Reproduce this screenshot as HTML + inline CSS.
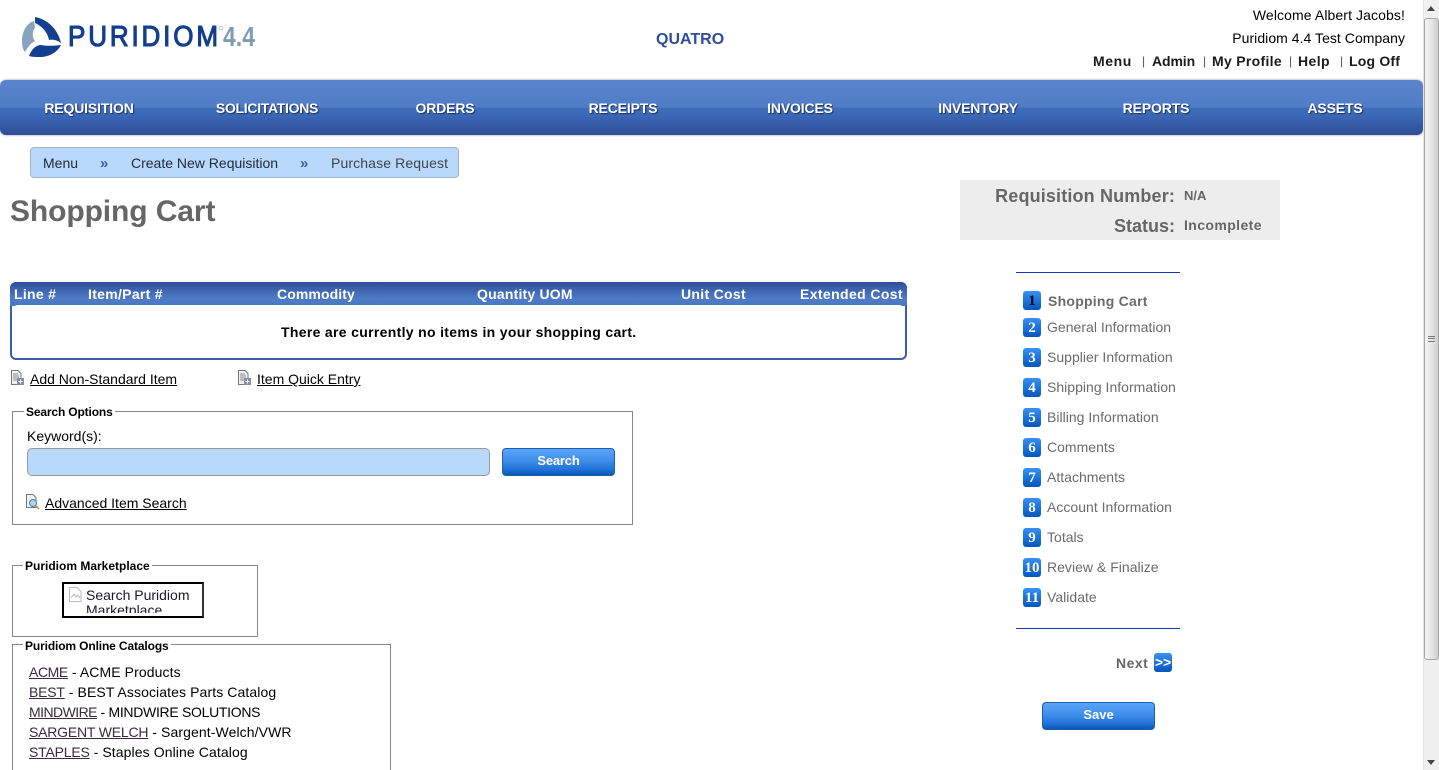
<!DOCTYPE html>
<html><head><meta charset="utf-8"><title>Shopping Cart</title>
<style>
html,body{margin:0;padding:0;background:#fff;overflow:hidden}
body{width:1439px;height:770px;position:relative;font-family:"Liberation Sans",Arial,sans-serif;font-size:14px;color:#000}
.t{position:absolute;white-space:nowrap;line-height:20px}
.b{font-weight:bold}
a{color:inherit}
.nav{position:absolute;left:0;top:80px;width:1423px;height:55px;border-radius:6px;background:linear-gradient(#5a84ca 0,#4f7cc6 50%,#3d6db9 51%,#3a68b5 65%,#2f4d97 100%);box-shadow:0 0 2px #888}
.n{position:absolute;top:98px;width:160px;text-align:center;color:#fff;font-weight:bold;font-size:14px;line-height:20px;text-shadow:1px 1px 1px #1c2f60;letter-spacing:-.15px}
.th{position:absolute;top:284px;color:#fff;font-weight:bold;font-size:14px;line-height:20px;white-space:nowrap;letter-spacing:.3px}
.fs{position:absolute;border:1px solid #888;box-sizing:border-box}
.lg{position:absolute;background:#fff;padding:0 2px;font-weight:bold;font-size:12px;line-height:14px;white-space:nowrap}
.btn{position:absolute;border-radius:4px;border:1px solid #1a5fb0;box-sizing:border-box;background:linear-gradient(#5aa4fa 0,#3f8eea 45%,#1f70d8 80%,#0a58b0 100%);color:#fff;font-weight:bold;font-size:13px;text-align:center}
.num{position:absolute;left:1023px;width:18px;height:19px;border-radius:3px;background:linear-gradient(#3a90ee,#1c74dc 50%,#0556b8);color:#fff;font:bold 15px/20px "Liberation Serif",serif;text-align:center}
.st{position:absolute;left:1047px;color:#6b6b6b;font-size:14px;line-height:20px;white-space:nowrap;letter-spacing:.02px}
.sep{position:absolute;left:1016px;width:164px;height:1px;background:#1238c0}
.cat{position:absolute;left:29px;line-height:20px;white-space:nowrap;letter-spacing:.1px}
.cat a{color:#3a2a3a;letter-spacing:-.2px}
.ic{position:absolute}
</style></head><body>

<svg style="position:absolute;left:20px;top:15px" width="240" height="44" viewBox="0 0 240 44">
<path d="M15 2 C27 4 38 14 41 28 C37 25 33 24 29 25 C28 18 22 11 15 8 Z" fill="#123f8e"/>
<path d="M14 6 C7 8 2 16 2 26 C2 31 3 35 5 37 C8 32 11 28 15 26 C12 22 12 17 15 13 Z" fill="#87a3bd"/>
<path d="M9 41 C12 33 17 30 21 30 C26 31 32 31 41 30 C37 38 28 42 20 42 C16 42 12 42 9 41 Z" fill="#123f8e"/>
<text transform="translate(48,31) scale(1,1.12)" font-family="Liberation Sans,sans-serif" font-size="26" fill="#123f8e" stroke="#123f8e" stroke-width="1" textLength="150" lengthAdjust="spacing">PURIDIOM</text>
<circle cx="201" cy="13" r="1.800" fill="none" stroke="#a9bccd" stroke-width=".8"/>
<text x="203" y="31" font-family="Liberation Sans,sans-serif" font-weight="bold" font-size="28" fill="#7f9bb4" textLength="32" lengthAdjust="spacingAndGlyphs">4.4</text>
</svg>

<div class="t b" style="left:656px;top:30px;font-size:16px;line-height:20px;color:#2f4d9b">QUATRO</div>
<div class="t" style="right:34px;top:5px;letter-spacing:.1px">Welcome Albert Jacobs!</div>
<div class="t" style="right:34px;top:28px;letter-spacing:.04px">Puridiom 4.4 Test Company</div>
<div class="t b" style="left:1093px;top:51px;color:#1a1a1a;letter-spacing:.6px">Menu</div>
<div class="t" style="left:1142px;top:51px;color:#555;font-size:12px">|</div>
<div class="t b" style="left:1152px;top:51px;color:#1a1a1a;letter-spacing:-.1px">Admin</div>
<div class="t" style="left:1203px;top:51px;color:#555;font-size:12px">|</div>
<div class="t b" style="left:1212px;top:51px;color:#1a1a1a;letter-spacing:.3px">My Profile</div>
<div class="t" style="left:1289px;top:51px;color:#555;font-size:12px">|</div>
<div class="t b" style="left:1298px;top:51px;color:#1a1a1a;letter-spacing:.4px">Help</div>
<div class="t" style="left:1340px;top:51px;color:#555;font-size:12px">|</div>
<div class="t b" style="left:1349px;top:51px;color:#1a1a1a;letter-spacing:.2px">Log Off</div>

<div class="nav"></div>
<div class="n" style="left:9px">REQUISITION</div>
<div class="n" style="left:187px;letter-spacing:-.3px">SOLICITATIONS</div>
<div class="n" style="left:365px">ORDERS</div>
<div class="n" style="left:543px">RECEIPTS</div>
<div class="n" style="left:720px">INVOICES</div>
<div class="n" style="left:898px">INVENTORY</div>
<div class="n" style="left:1076px">REPORTS</div>
<div class="n" style="left:1255px">ASSETS</div>

<div style="position:absolute;left:30px;top:147px;width:429px;height:31px;box-sizing:border-box;background:#b9d9fc;border:1px solid #a8b4c4;border-radius:4px"></div>
<div class="t" style="left:43px;top:153px;color:#222b3a">Menu</div>
<div class="t b" style="left:100px;top:154px;color:#3a5aa8;font-size:15px">»</div>
<div class="t" style="left:131px;top:153px;color:#222b3a">Create New Requisition</div>
<div class="t b" style="left:300px;top:154px;color:#3a5aa8;font-size:15px">»</div>
<div class="t" style="left:331px;top:153px;color:#3f444c;letter-spacing:.12px">Purchase Request</div>

<div class="t b" style="left:10px;top:195px;font-size:30px;line-height:34px;color:#666;letter-spacing:-.1px">Shopping Cart</div>

<div style="position:absolute;left:960px;top:180px;width:320px;height:60px;background:#ededed"></div>
<div class="t b" style="right:264px;top:186px;font-size:18px;color:#666;letter-spacing:.15px">Requisition Number:</div>
<div class="t b" style="left:1184px;top:186px;font-size:13px;color:#666">N/A</div>
<div class="t b" style="right:264px;top:216px;font-size:18px;color:#666">Status:</div>
<div class="t b" style="left:1184px;top:215px;font-size:14px;color:#666;letter-spacing:.4px">Incomplete</div>

<div style="position:absolute;left:10px;top:282px;width:897px;height:78px;box-sizing:border-box;border:2px solid #3a5ea8;border-radius:6px;background:#fff"></div>
<div style="position:absolute;left:10px;top:282px;width:897px;height:24px;border-radius:6px 6px 0 0;background:linear-gradient(#2f4f9c,#4f7cc6 70%,#4a76c0)"></div>
<div style="position:absolute;left:12px;top:305px;width:893px;height:6px;background:#fff;border-radius:6px 6px 0 0"></div>
<div class="th" style="left:14px">Line #</div>
<div class="th" style="left:88px">Item/Part #</div>
<div class="th" style="left:277px;letter-spacing:.1px">Commodity</div>
<div class="th" style="left:477px;letter-spacing:.2px">Quantity UOM</div>
<div class="th" style="left:681px">Unit Cost</div>
<div class="th" style="left:800px;letter-spacing:.38px">Extended Cost</div>
<div class="t b" style="left:281px;top:322px;letter-spacing:.32px">There are currently no items in your shopping cart.</div>

<svg class="ic" style="left:10px;top:370px" width="15" height="16"><path d="M1.500 .5H8L11 3.500V14.500H1.500Z" fill="#f2f2f2" stroke="#777"/><path d="M3 4H8M3 6H9M3 8H9M3 10H7" stroke="#888"/><rect x="7" y="8" width="7" height="7" fill="#8a8ab0"/><path d="M10.500 9.500V13.500M8.500 11.500H12.500" stroke="#fff"/></svg>
<div class="t" style="left:30px;top:369px"><a href="#">Add Non-Standard Item</a></div>
<svg class="ic" style="left:237px;top:370px" width="15" height="16"><path d="M1.500 .5H8L11 3.500V14.500H1.500Z" fill="#f2f2f2" stroke="#777"/><path d="M3 4H8M3 6H9M3 8H9M3 10H7" stroke="#888"/><rect x="7" y="8" width="7" height="7" fill="#8a8ab0"/><path d="M10.500 9.500V13.500M8.500 11.500H12.500" stroke="#fff"/></svg>
<div class="t" style="left:257px;top:369px"><a href="#">Item Quick Entry</a></div>

<div class="fs" style="left:12px;top:411px;width:621px;height:114px"></div>
<div class="lg" style="left:24px;top:405px;letter-spacing:-.15px">Search Options</div>
<div class="t" style="left:27px;top:426px">Keyword(s):</div>
<div style="position:absolute;left:27px;top:448px;width:463px;height:28px;box-sizing:border-box;background:#b9d9fc;border:1px solid #999;border-radius:5px"></div>
<div class="btn" style="left:502px;top:448px;width:113px;height:28px;line-height:24px;letter-spacing:-.2px">Search</div>
<svg class="ic" style="left:25px;top:494px" width="15" height="16"><path d="M1.500 .5H8L11 3.500V13.500H1.500Z" fill="#f2f2f2" stroke="#777"/><circle cx="8" cy="9" r="3.500" fill="#a8d4ee" stroke="#4a7fa5"/><path d="M10.500 11.500L14 15" stroke="#d98a3a" stroke-width="1.500"/></svg>
<div class="t" style="left:45px;top:493px"><a href="#">Advanced Item Search</a></div>

<div class="fs" style="left:12px;top:565px;width:246px;height:72px"></div>
<div class="lg" style="left:23px;top:559px">Puridiom Marketplace</div>
<div style="position:absolute;left:62px;top:582px;width:142px;height:36px;box-sizing:border-box;border:2px solid #000;border-right-color:#333;background:#fff">
  <div style="position:absolute;left:22px;top:4px;height:25px;overflow:hidden;font-size:14px;line-height:15px;width:115px;color:#1a1a2a"><div>Search Puridiom Marketplace</div></div>
  <svg class="ic" style="left:5px;top:3px" width="13" height="15"><path d="M.5 .5H8L12 4.500V14.500H.5Z" fill="#fff" stroke="#bbb"/><path d="M2 11L5 7L7 10L9 8L11 11" fill="none" stroke="#bbb"/></svg>
</div>

<div class="fs" style="left:12px;top:644px;width:379px;height:140px"></div>
<div class="lg" style="left:23px;top:639px;letter-spacing:-.13px">Puridiom Online Catalogs</div>
<div class="cat" style="top:662px"><a href="#" style="letter-spacing:-.4px">ACME</a> - ACME Products</div>
<div class="cat" style="top:682px"><a href="#">BEST</a> - BEST Associates Parts Catalog</div>
<div class="cat" style="top:702px;letter-spacing:-.3px"><a href="#" style="letter-spacing:-.55px">MINDWIRE</a> - MINDWIRE SOLUTIONS</div>
<div class="cat" style="top:722px"><a href="#">SARGENT WELCH</a> - Sargent-Welch/VWR</div>
<div class="cat" style="top:742px"><a href="#">STAPLES</a> - Staples Online Catalog</div>

<div class="sep" style="top:272px"></div>
<div class="num" style="top:291px;color:#000">1</div><div class="st b" style="top:291px;left:1048px;letter-spacing:.25px">Shopping Cart</div>
<div class="num" style="top:318px">2</div><div class="st" style="top:317px">General Information</div>
<div class="num" style="top:348px">3</div><div class="st" style="top:347px">Supplier Information</div>
<div class="num" style="top:378px">4</div><div class="st" style="top:377px">Shipping Information</div>
<div class="num" style="top:408px">5</div><div class="st" style="top:407px">Billing Information</div>
<div class="num" style="top:438px">6</div><div class="st" style="top:437px">Comments</div>
<div class="num" style="top:468px">7</div><div class="st" style="top:467px">Attachments</div>
<div class="num" style="top:498px">8</div><div class="st" style="top:497px">Account Information</div>
<div class="num" style="top:528px">9</div><div class="st" style="top:527px">Totals</div>
<div class="num" style="top:558px">10</div><div class="st" style="top:557px">Review &amp; Finalize</div>
<div class="num" style="top:588px">11</div><div class="st" style="top:587px">Validate</div>
<div class="sep" style="top:628px"></div>

<div class="t b" style="left:1116px;top:653px;color:#666;letter-spacing:.5px">Next</div>
<div class="num" style="left:1154px;top:653px;font:bold 14px/19px 'Liberation Sans',sans-serif">&gt;&gt;</div>
<div class="btn" style="left:1042px;top:702px;width:113px;height:28px;line-height:24px">Save</div>

<div style="position:absolute;left:1423px;top:0;width:16px;height:770px;background:#f0f0f0;border-left:1px solid #e4e4e4;box-sizing:border-box"></div>
<div style="position:absolute;left:1424px;top:18px;width:15px;height:642px;box-sizing:border-box;border:1px solid #a6a6a6;border-radius:3px;background:linear-gradient(90deg,#f4f4f4,#e6e6e6 50%,#cfcfd2)"></div>
<div style="position:absolute;left:1428px;top:336px;width:7px;height:6px;border-top:1px solid #777;border-bottom:1px solid #777;box-sizing:border-box"></div>
<div style="position:absolute;left:1428px;top:338px;width:7px;height:1px;background:#777"></div>
<svg class="ic" style="left:1427px;top:6px" width="9" height="6"><path d="M4 0L8 5H0Z" fill="#444"/></svg>
<svg class="ic" style="left:1427px;top:760px" width="9" height="6"><path d="M0 0H8L4 5Z" fill="#444"/></svg>
</body></html>
